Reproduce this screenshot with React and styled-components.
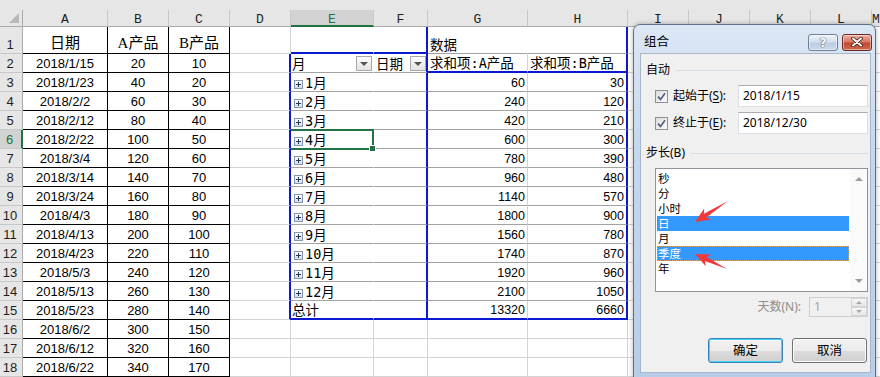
import React from "react";
import styled, { createGlobalStyle } from "styled-components";

const GRID = "#d4d4d4";
const BLACK = "#000";
const BLUE = "#0b18d2";
const PIV = "#a3a3a3";
const NONE = "transparent";
const GREEN = "#217346";

const LETTERS = ["A", "B", "C", "D", "E", "F", "G", "H", "I", "J", "K", "L", "M"];

const DATES = [
  "2018/1/15", "2018/1/23", "2018/2/2", "2018/2/12", "2018/2/22", "2018/3/4",
  "2018/3/14", "2018/3/24", "2018/4/3", "2018/4/13", "2018/4/23", "2018/5/3",
  "2018/5/13", "2018/5/23", "2018/6/2", "2018/6/12", "2018/6/22",
];
const SUM_A = [60, 240, 420, 600, 780, 960, 1140, 1800, 1560, 1740, 1920, 2100];
const SUM_B = [30, 120, 210, 300, 390, 480, 570, 900, 780, 870, 960, 1050];
const STEPS = ["秒", "分", "小时", "日", "月", "季度", "年"];
const PICKED = ["日", "季度"];

const GlobalStyle = createGlobalStyle`
  *, *::before, *::after { box-sizing: border-box; }
  html, body { margin: 0; padding: 0; background: #fff; overflow: hidden; }
  body { font-family: "Noto Sans", "Noto Sans CJK SC", sans-serif; }
`;

const Screen = styled.div`
  position: relative;
  width: 880px;
  height: 377px;
  overflow: hidden;
  background: #fff;
`;

const TopStrip = styled.div`
  height: 10px;
  background: #e6e6e6;
`;

const Sheet = styled.div`
  display: grid;
  grid-template-columns: 23px 85px 61px 61px 61px 83px 54px 100px 100px 61px 61px 61px 61px 1fr;
  grid-template-rows: 17px 27px repeat(17, 19px);
  background: #fff;
`;

const Corner = styled.div`
  grid-row: 1;
  grid-column: 1;
  display: flex;
  align-items: flex-end;
  justify-content: flex-end;
  padding: 0 3px 3px 0;
  background: #e6e6e6;
  border-right: 1px solid #ababab;
  border-bottom: 1px solid #ababab;

  &::before {
    content: "";
    border-left: 10px solid transparent;
    border-bottom: 10px solid #b8b8b8;
  }
`;

const ColHead = styled.div`
  grid-row: 1;
  grid-column: ${(p) => p.$col};
  display: flex;
  align-items: center;
  justify-content: center;
  padding-top: 3px;
  background: ${(p) => (p.$active ? "#d2d2d2" : "#e6e6e6")};
  color: ${(p) => (p.$active ? GREEN : "#1e1e1e")};
  border-right: 1px solid #c8c8c8;
  border-bottom: ${(p) => (p.$active ? `2px solid ${GREEN}` : "1px solid #ababab")};
  font: 13px/15px "Liberation Mono", monospace;
`;

const RowHead = styled.div`
  grid-column: 1;
  grid-row: ${(p) => p.$row};
  display: flex;
  align-items: flex-end;
  justify-content: center;
  padding-right: 2px;
  background: ${(p) => (p.$active ? "#d2d2d2" : "#e6e6e6")};
  color: ${(p) => (p.$active ? GREEN : "#1e1e1e")};
  border-right: ${(p) => (p.$active ? `2px solid ${GREEN}` : "1px solid #ababab")};
  border-bottom: 1px solid #c8c8c8;
  font: 13px/17px "Liberation Sans", sans-serif;
`;

const FONTS = {
  title: `font: 15px/20px "Liberation Serif", "Noto Sans CJK SC", serif;`,
  data: `font: 13px/17px "Liberation Sans", sans-serif;`,
  pivot: `font: 13.5px/15px "DejaVu Sans Mono", "Noto Sans CJK SC", monospace;`,
  num: `font: 12.5px/15px "Liberation Sans", sans-serif;`,
};

const JUSTIFY = { left: "flex-start", center: "center", right: "flex-end" };

const Cell = styled.div`
  grid-row: ${(p) => p.$row};
  grid-column: ${(p) => p.$col};
  display: flex;
  align-items: flex-end;
  justify-content: ${(p) => JUSTIFY[p.$align]};
  min-width: 0;
  padding: ${(p) => p.$pad};
  white-space: nowrap;
  color: #000;
  border-right: ${(p) => p.$rw}px solid ${(p) => p.$rc};
  border-bottom: ${(p) => p.$bw}px solid ${(p) => p.$bc};
  ${(p) => FONTS[p.$font]}
`;

const DropBtn = styled.span`
  margin-left: auto;
  margin-bottom: 1px;
  width: 16px;
  height: 15px;
  flex: none;
  display: flex;
  align-items: center;
  justify-content: center;
  border: 1px solid #a8a8a8;
  background: linear-gradient(#fdfdfd, #e2e2e2);

  &::before {
    content: "";
    border-left: 4px solid transparent;
    border-right: 4px solid transparent;
    border-top: 4px solid #555;
  }
`;

const Expand = styled.span`
  position: relative;
  flex: none;
  width: 9px;
  height: 9px;
  margin: 0 2px 2px 3px;
  border: 1px solid #8596b0;
  background: linear-gradient(#ffffff, #d6dde8);

  &::before,
  &::after {
    content: "";
    position: absolute;
    background: #2a3950;
  }
  &::before { left: 1px; top: 3px; width: 5px; height: 1px; }
  &::after { left: 3px; top: 1px; width: 1px; height: 5px; }
`;

const Selection = styled.div`
  grid-row: 7;
  grid-column: 6;
  position: relative;
  z-index: 2;
  margin: -1px 0 -1px 0;
  border: 2px solid ${GREEN};
  border-left: none;
  pointer-events: none;

  &::after {
    content: "";
    position: absolute;
    right: -4px;
    bottom: -4px;
    width: 7px;
    height: 7px;
    background: ${GREEN};
    border: 1px solid #fff;
  }
`;

/* ---------- dialog ---------- */

const Dialog = styled.div`
  position: absolute;
  left: 633px;
  top: 24px;
  width: 243px;
  height: 354px;
  display: flex;
  flex-direction: column;
  border: 1px solid #5f6f86;
  border-radius: 7px 7px 0 0;
  background: linear-gradient(180deg, #dce7f4 0%, #c6d8ee 35%, #b8cde8 100%);
  box-shadow: 0 0 5px rgba(0, 0, 0, 0.3);
  font: 12px/16px "Noto Sans", "Noto Sans CJK SC", sans-serif;
  color: #000;
  z-index: 5;
`;

const TitleBar = styled.div`
  height: 28px;
  flex: none;
  display: flex;
  align-items: center;
  gap: 4px;
  padding: 6px 3px 0 10px;
`;

const Title = styled.span`
  flex: 1;
  font-size: 12.5px;
`;

const CapButton = styled.span`
  width: 30px;
  height: 17px;
  display: flex;
  align-items: center;
  justify-content: center;
  border-radius: 3px;
  border: 1px solid ${(p) => (p.$close ? "#6c2a20" : "#6f7f97")};
  background: ${(p) =>
    p.$close
      ? "linear-gradient(#eab0a4 0%, #d8735f 48%, #c4462f 52%, #cf6a52 100%)"
      : "linear-gradient(#eef3f9 0%, #d3deec 48%, #bccde2 52%, #cad8ea 100%)"};
  box-shadow: inset 0 0 0 1px rgba(255, 255, 255, 0.45);
  color: #fff;
  font: bold 13px/13px "DejaVu Sans", sans-serif;
  text-shadow: 0 0 1px #2c3a52, 0 0 1px #2c3a52;
`;

const Panel = styled.div`
  flex: 1;
  display: flex;
  flex-direction: column;
  margin: 0 4px 4px 6px;
  background: #f0f0f0;
  border: 1px solid #a7b6ca;
`;

const GroupHead = styled.div`
  display: flex;
  align-items: center;
  height: 16px;
  margin-top: ${(p) => p.$top}px;
  padding: 0 2px 0 5px;

  &::after {
    content: "";
    flex: 1;
    height: 1px;
    margin-left: 6px;
    background: #d5dde5;
  }
`;

const CheckRow = styled.div`
  display: flex;
  align-items: center;
  height: 22px;
  margin-top: ${(p) => p.$top}px;
  padding: 0 2px 0 14px;
`;

const CheckBox = styled.span`
  width: 13px;
  height: 13px;
  flex: none;
  display: flex;
  align-items: center;
  justify-content: center;
  border: 1px solid #8e8f8f;
  background: linear-gradient(135deg, #dcdcdc, #fbfbfb);
`;

const CheckLabel = styled.span`
  margin-left: 5px;

  u { text-decoration: underline; text-underline-offset: 2px; }
`;

const TextBox = styled.span`
  margin-left: auto;
  width: 130px;
  height: 22px;
  display: flex;
  align-items: center;
  padding-left: 4px;
  background: #fff;
  border: 1px solid #dbdfe6;
  border-top-color: #abadb3;
  font: 12px/16px "Noto Sans", sans-serif;
`;

const ListBox = styled.div`
  display: flex;
  margin: 7px 0 0 14px;
  width: 213px;
  height: 124px;
  background: #fff;
  border: 1px solid #8f949b;
`;

const Items = styled.div`
  flex: 1;
  padding: 2px 1px 0 1px;
`;

const Item = styled.div`
  height: 15px;
  overflow: hidden;
  font-size: 11.5px;
  line-height: 15px;
  padding-left: 1px;
  background: ${(p) => (p.$on ? "#3399ff" : "transparent")};
  color: ${(p) => (p.$on ? "#fff" : "#000")};
  outline: ${(p) => (p.$focus ? "1px dotted #d9a36f" : "none")};
  outline-offset: -1px;
`;

const ScrollBar = styled.div`
  width: 17px;
  display: flex;
  flex-direction: column;
  justify-content: space-between;
  align-items: center;
  padding: 8px 0 8px;
  background: #fafafa;
`;

const Arrow = styled.span`
  border-left: 4px solid transparent;
  border-right: 4px solid transparent;
  ${(p) => (p.$down ? "border-top" : "border-bottom")}: 4px solid #9a9a9a;
`;

const DaysRow = styled.div`
  display: flex;
  align-items: center;
  justify-content: flex-end;
  height: 20px;
  margin-top: 5px;
  padding-right: 2px;
  color: #8d8d8d;
`;

const SpinBox = styled.span`
  display: flex;
  margin-left: 8px;
  width: 59px;
  height: 20px;
  border: 1px solid #cfcfcf;
  background: #f0f0f0;
`;

const SpinValue = styled.span`
  flex: 1;
  padding-left: 4px;
  line-height: 18px;
  color: #a3a3a3;
  font-family: "Noto Sans", sans-serif;
`;

const SpinButtons = styled.span`
  width: 16px;
  display: flex;
  flex-direction: column;
`;

const SpinPart = styled.span`
  flex: 1;
  display: flex;
  align-items: center;
  justify-content: center;
  border: 1px solid #d4d4d4;
  background: linear-gradient(#f7f7f7, #e6e6e6);

  &::before {
    content: "";
    border-left: 3px solid transparent;
    border-right: 3px solid transparent;
    ${(p) => (p.$down ? "border-top" : "border-bottom")}: 3px solid #a8a8a8;
  }
`;

const ButtonRow = styled.div`
  display: flex;
  justify-content: flex-end;
  gap: 9px;
  margin-top: 21px;
  padding-right: 3px;
`;

const Button = styled.span`
  width: 75px;
  height: 25px;
  display: flex;
  align-items: center;
  justify-content: center;
  border-radius: 3px;
  border: 1px solid ${(p) => (p.$primary ? "#3c7fb1" : "#707070")};
  background: linear-gradient(#f2f2f2 0%, #ebebeb 50%, #dddddd 51%, #cfcfcf 100%);
  box-shadow: inset 0 0 0 1px ${(p) => (p.$primary ? "#48d5fc" : "#fcfcfc")};
  font-size: 12.5px;
`;

const Marks = styled.svg`
  position: absolute;
  left: 0;
  top: 0;
  width: 100%;
  height: 100%;
  pointer-events: none;
`;

function arrowPoints(tip, tail) {
  const dx = tail[0] - tip[0];
  const dy = tail[1] - tip[1];
  const len = Math.hypot(dx, dy);
  const ux = dx / len;
  const uy = dy / len;
  const nx = -uy;
  const ny = ux;
  const at = (d, w) => [tip[0] + ux * d + nx * w, tip[1] + uy * d + ny * w];
  const pts = [tip, at(15, 6.5), at(12, 2.2), tail, at(12, -2.2), at(15, -6.5)];
  return pts.map((p) => p.map((v) => v.toFixed(1)).join(",")).join(" ");
}

function CloseGlyph() {
  return (
    <svg width="12" height="10" viewBox="0 0 12 10">
      <path d="M2 1.5 L10 8.5 M10 1.5 L2 8.5" stroke="#3b1a16" strokeWidth="3.6" strokeLinecap="round" />
      <path d="M2 1.5 L10 8.5 M10 1.5 L2 8.5" stroke="#fff" strokeWidth="2" strokeLinecap="round" />
    </svg>
  );
}

function Tick() {
  return (
    <svg width="9" height="9" viewBox="0 0 9 9">
      <path d="M1 4.6 L3.5 7.4 L8 1.2" fill="none" stroke="#4a5f82" strokeWidth="1.6" />
    </svg>
  );
}

function GroupDialog() {
  return (
    <Dialog>
      <TitleBar>
        <Title>组合</Title>
        <CapButton>?</CapButton>
        <CapButton $close>
          <CloseGlyph />
        </CapButton>
      </TitleBar>
      <Panel>
        <GroupHead $top={8}>自动</GroupHead>
        <CheckRow $top={7}>
          <CheckBox><Tick /></CheckBox>
          <CheckLabel>起始于(<u>S</u>):</CheckLabel>
          <TextBox>2018/1/15</TextBox>
        </CheckRow>
        <CheckRow $top={5}>
          <CheckBox><Tick /></CheckBox>
          <CheckLabel>终止于(<u>E</u>):</CheckLabel>
          <TextBox>2018/12/30</TextBox>
        </CheckRow>
        <GroupHead $top={11}>步长(B)</GroupHead>
        <ListBox>
          <Items>
            {STEPS.map((s) => (
              <Item key={s} $on={PICKED.includes(s)} $focus={s === "季度"}>
                {s}
              </Item>
            ))}
          </Items>
          <ScrollBar>
            <Arrow />
            <Arrow $down />
          </ScrollBar>
        </ListBox>
        <DaysRow>
          天数(N):
          <SpinBox>
            <SpinValue>1</SpinValue>
            <SpinButtons>
              <SpinPart />
              <SpinPart $down />
            </SpinButtons>
          </SpinBox>
        </DaysRow>
        <ButtonRow>
          <Button $primary>确定</Button>
          <Button>取消</Button>
        </ButtonRow>
      </Panel>
      <Marks>
        <polygon points={arrowPoints([61, 197], [94, 176])} fill="#f03a3a" />
        <polygon points={arrowPoints([61, 229], [93, 244])} fill="#f03a3a" />
      </Marks>
    </Dialog>
  );
}

// what one sheet cell holds and how it is edged; r is the sheet row (1..18), c the column (0 = A)
function spec(r, c) {
  const s = { rc: GRID, rw: 1, bc: GRID, bw: 1, align: "left", font: "data", pad: "0 2px", content: null };

  if (c <= 2) {
    s.rc = BLACK;
    s.bc = BLACK;
    s.align = "center";
    if (r === 1) {
      s.font = "title";
      s.content = ["日期", "A产品", "B产品"][c];
    } else {
      s.content = [DATES[r - 2], (r - 1) * 20, (r - 1) * 10][c];
    }
  }

  if (c === 3 && r >= 2 && r <= 15) {
    s.rc = BLUE;
    s.rw = 2;
  }

  if ((c === 4 || c === 5) && r <= 15) {
    s.font = "pivot";
    if (c === 4) s.rc = NONE;
    else {
      s.rc = BLUE;
      s.rw = 2;
    }
    if (r === 1 || r === 15) {
      s.bc = BLUE;
      s.bw = 2;
    } else {
      s.bc = PIV;
    }
    if (r === 2) {
      s.pad = c === 4 ? "0 1px 0 1px" : "0 0 0 2px";
      s.content = (
        <>
          {c === 4 ? "月" : "日期"}
          <DropBtn />
        </>
      );
    }
    if (c === 4 && r >= 3 && r <= 14) {
      s.pad = "0";
      s.content = (
        <>
          <Expand />
          {r - 2}月
        </>
      );
    }
    if (c === 4 && r === 15) {
      s.pad = "0 1px";
      s.content = "总计";
    }
  }

  if ((c === 6 || c === 7) && r <= 15) {
    s.font = "pivot";
    if (c === 6) s.rc = r === 1 ? NONE : GRID;
    else {
      s.rc = BLUE;
      s.rw = 2;
    }
    if (r === 2 || r === 15) {
      s.bc = BLUE;
      s.bw = 2;
    } else {
      s.bc = PIV;
    }
    if (r === 1 && c === 6) s.content = "数据";
    if (r === 2) s.content = c === 6 ? "求和项:A产品" : "求和项:B产品";
    if (r >= 3) {
      s.font = "num";
      s.align = "right";
      if (r === 15) s.content = c === 6 ? 13320 : 6660;
      else s.content = (c === 6 ? SUM_A : SUM_B)[r - 3];
    }
  }

  return s;
}

function App() {
  const cells = [];
  for (let r = 1; r <= 18; r++) {
    for (let c = 0; c < LETTERS.length; c++) {
      const s = spec(r, c);
      cells.push(
        <Cell
          key={`${r}-${c}`}
          $row={r + 1}
          $col={c + 2}
          $rc={s.rc}
          $rw={s.rw}
          $bc={s.bc}
          $bw={s.bw}
          $align={s.align}
          $font={s.font}
          $pad={s.pad}
        >
          {s.content}
        </Cell>
      );
    }
  }

  return (
    <Screen>
      <GlobalStyle />
      <TopStrip />
      <Sheet>
        <Corner />
        {LETTERS.map((l, i) => (
          <ColHead key={l} $col={i + 2} $active={l === "E"}>
            {l}
          </ColHead>
        ))}
        {Array.from({ length: 18 }, (_, i) => (
          <RowHead key={i} $row={i + 2} $active={i + 1 === 6}>
            {i + 1}
          </RowHead>
        ))}
        {cells}
        <Selection />
      </Sheet>
      <GroupDialog />
    </Screen>
  );
}

export default App;
